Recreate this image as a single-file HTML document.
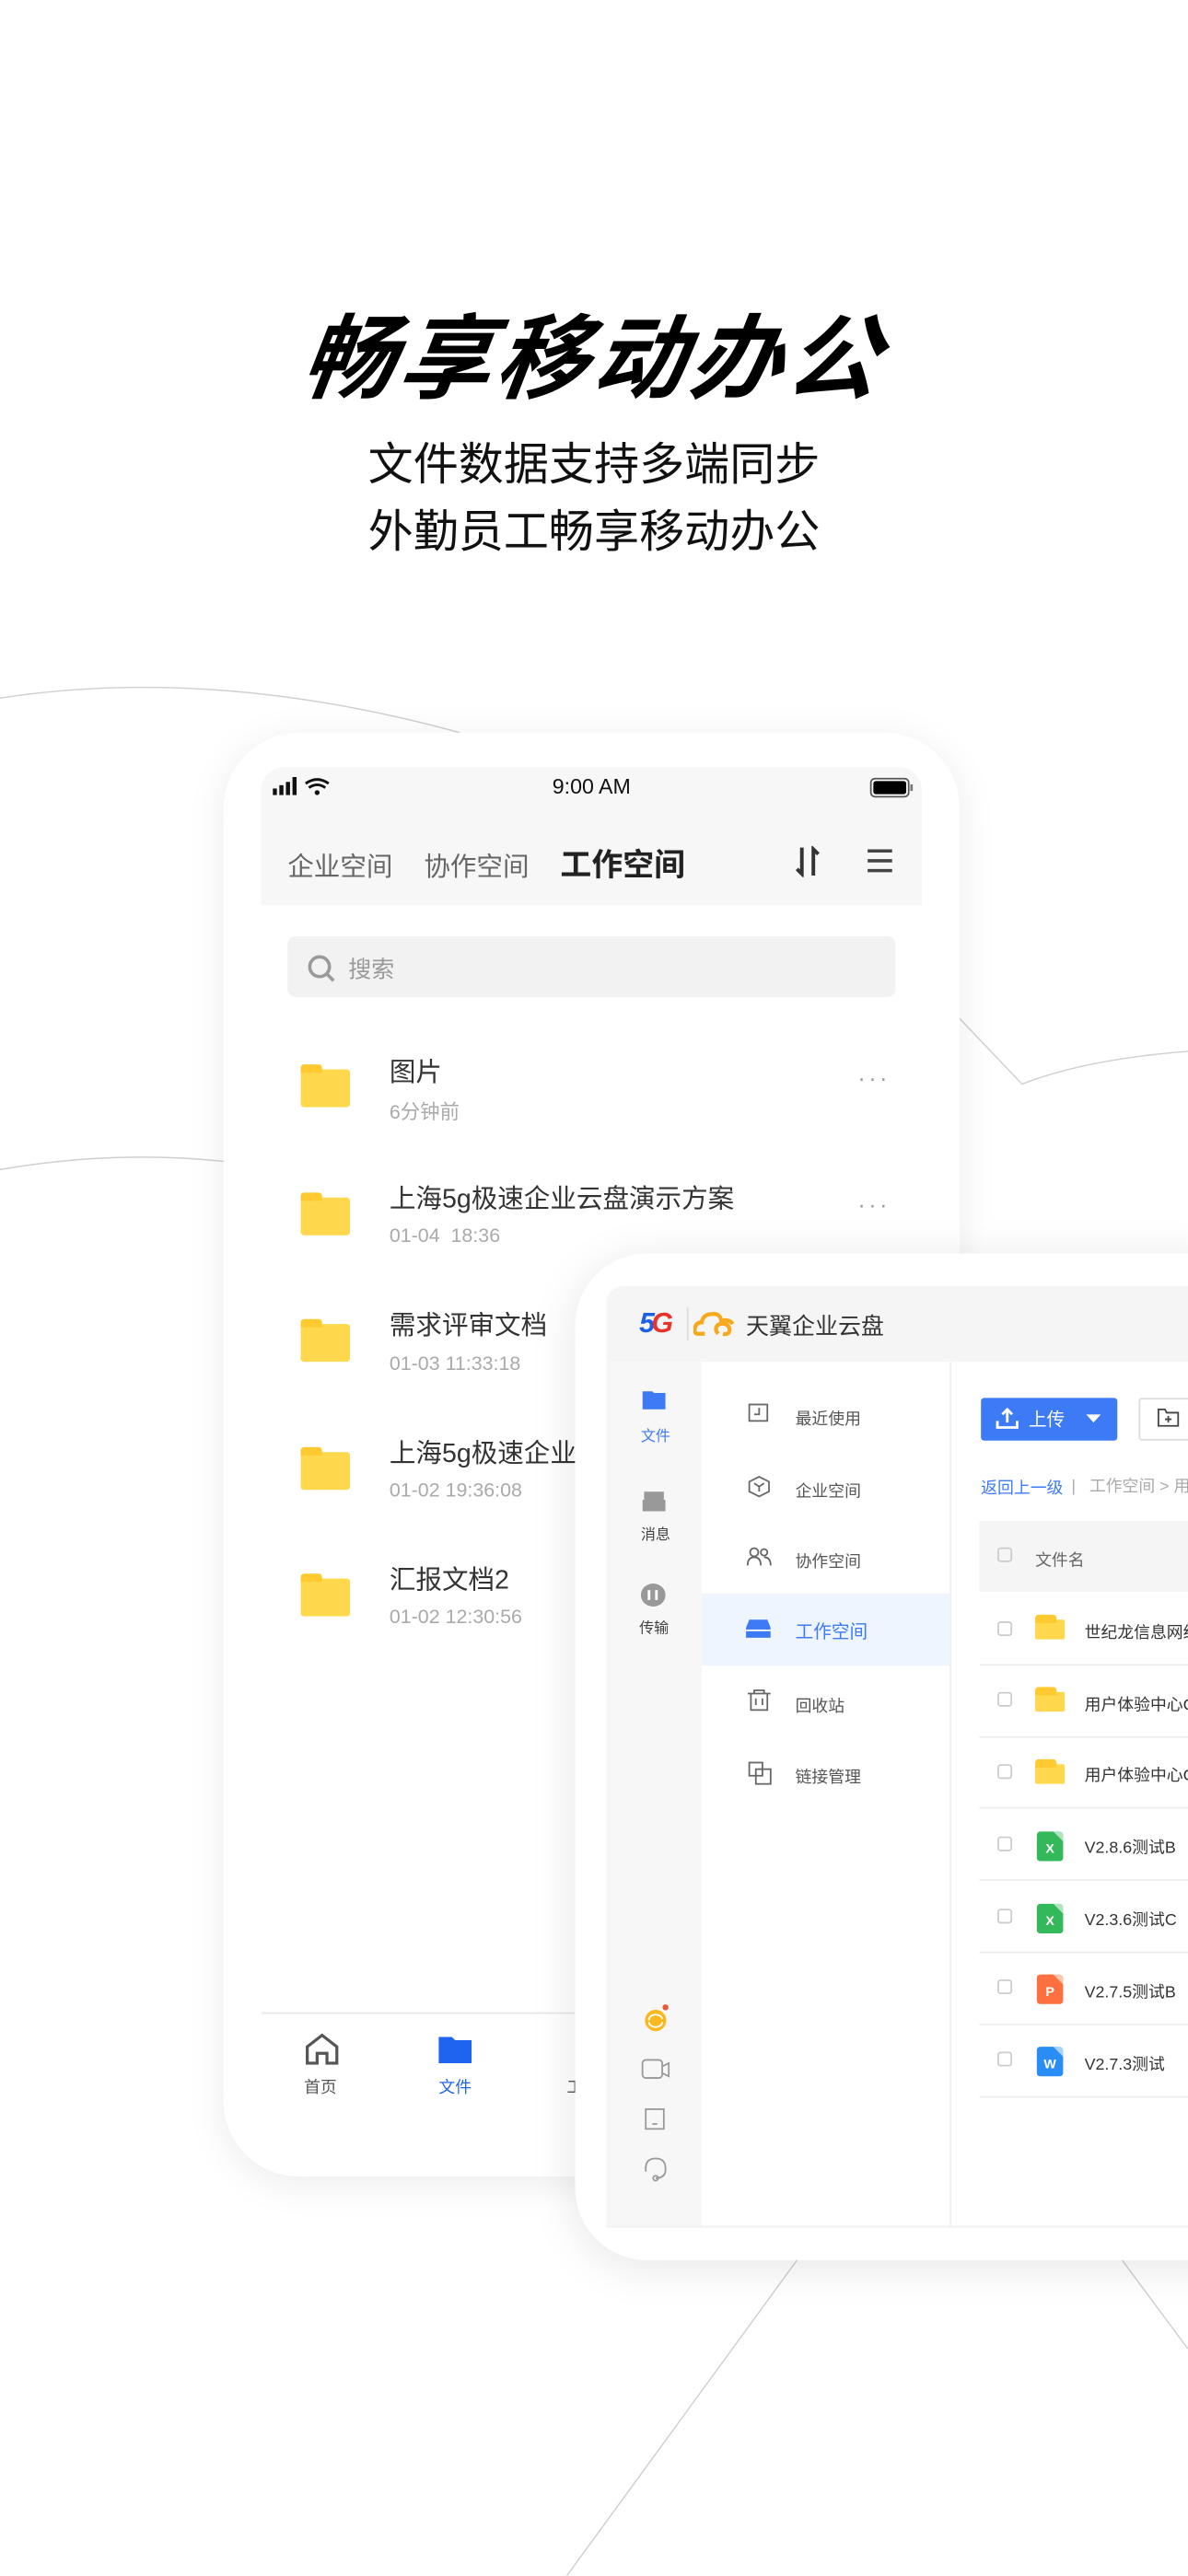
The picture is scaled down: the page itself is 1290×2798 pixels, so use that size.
<!DOCTYPE html>
<html><head><meta charset="utf-8">
<style>
*{margin:0;padding:0;box-sizing:border-box}
html,body{width:1290px;height:2796px;overflow:hidden;background:#fff}
#w{position:absolute;left:0;top:0;width:723px;height:1568px;transform:scale(1.78423);transform-origin:0 0;font-family:"Liberation Sans","Noto Sans CJK SC",sans-serif;}
.a{position:absolute;white-space:nowrap}
.fold{position:absolute;width:30px;height:23px;background:#FFD84D;border-radius:2px}
.fold:before{content:"";position:absolute;left:0;top:-3px;width:13px;height:5px;background:#FFC930;border-radius:2px 2px 0 0}
.t{font-size:16px;color:#333}
.s{font-size:12px;color:#aaa}
.dots{font-size:14px;color:#999;letter-spacing:2px}
.mi{font-size:10px;color:#555}
.cb{position:absolute;width:9px;height:9px;border:1px solid #ccc;border-radius:2px;background:#fff}
.rl{position:absolute;left:596px;width:130px;height:1px;background:#eee}
.fi{position:absolute;width:16px;height:18px;border-radius:2px;color:#fff;font-size:8px;font-weight:bold;text-align:center;line-height:22px}
.fi:after{content:"";position:absolute;right:0;top:0;border-style:solid;border-width:0 6px 6px 0;border-color:transparent #fff transparent transparent;opacity:.6}
.rn{font-size:10px;color:#333}
</style></head><body><div id="w">
<svg class="a" style="left:0;top:0" width="723" height="1568">
<g fill="none" stroke="#cfcfcf" stroke-width="0.8">
<path d="M0 425 Q130 405 280 446"/>
<path d="M0 712 Q70 700 136 707"/>
<path d="M584 620 L622 660 Q660 645 723 640"/>
<path d="M485 1376 L345 1568"/>
<path d="M683 1376 L723 1430"/>
</g></svg>
<div class="a" style="left:0;width:723px;top:183px;text-align:center;font-size:56px;font-weight:bold;font-style:italic;letter-spacing:3px;color:#000;transform:skewX(-8deg);line-height:72px">畅享移动办公</div>
<div class="a" style="left:0;width:723px;top:262px;text-align:center;font-size:27.5px;color:#111;line-height:41px">文件数据支持多端同步<br>外勤员工畅享移动办公</div>

<!-- phone -->
<div class="a" style="left:136px;top:446px;width:448px;height:879px;background:#fff;border-radius:46px;box-shadow:0 4px 24px rgba(0,0,0,.08)"></div>
<div class="a" style="left:159px;top:467px;width:402px;height:84px;background:#f7f7f7;border-radius:14px 14px 0 0"></div>
<svg class="a" style="left:166px;top:473px" width="40" height="12"><rect x="0" y="7" width="2.5" height="4" fill="#111"/><rect x="4" y="5" width="2.5" height="6" fill="#111"/><rect x="8" y="3" width="2.5" height="8" fill="#111"/><rect x="12" y="0" width="2.5" height="11" fill="#111"/><path d="M20 4 Q27 -1 34 4 M22 6.5 Q27 3 32 6.5" stroke="#111" stroke-width="1.6" fill="none"/><circle cx="27" cy="9.5" r="1.5" fill="#111"/></svg>
<div class="a" style="left:300px;width:120px;text-align:center;top:471px;font-size:13px;color:#111">9:00 AM</div>
<svg class="a" style="left:529px;top:473px" width="28" height="13"><rect x="1" y="1" width="23" height="11" rx="2.5" fill="#fff" stroke="#555"/><rect x="2.5" y="2.5" width="20" height="8" rx="1.5" fill="#000"/><rect x="25" y="4.5" width="1.5" height="4" fill="#777"/></svg>
<div class="a" style="left:175px;top:514px;font-size:16px;color:#666">企业空间</div>
<div class="a" style="left:258px;top:514px;font-size:16px;color:#666">协作空间</div>
<div class="a" style="left:341px;top:512px;font-size:19px;font-weight:bold;color:#222">工作空间</div>
<svg class="a" style="left:483px;top:515px" width="18" height="19" stroke="#333" stroke-width="2.2" fill="none"><path d="M5 1 V17 L2 14"/><path d="M12 18 V2 L15 5"/></svg>
<svg class="a" style="left:528px;top:516px" width="15" height="16" stroke="#444" stroke-width="2"><path d="M0 2H15M0 8H15M0 14H15"/></svg>
<div class="a" style="left:175px;top:570px;width:370px;height:37px;background:#f2f2f2;border-radius:5px"></div>
<svg class="a" style="left:187px;top:581px" width="17" height="17" stroke="#999" stroke-width="2" fill="none"><circle cx="7.5" cy="7.5" r="6"/><path d="M12 12 L16 16"/></svg>
<div class="a" style="left:212px;top:580px;font-size:14px;color:#999">搜索</div>

<div class="fold" style="left:183px;top:651px"></div>
<div class="a t" style="left:237px;top:639px">图片</div>
<div class="a s" style="left:237px;top:668px">6分钟前</div>
<div class="a dots" style="left:522px;top:648px">···</div>
<div class="fold" style="left:183px;top:729px"></div>
<div class="a t" style="left:237px;top:716px">上海5g极速企业云盘演示方案</div>
<div class="a s" style="left:237px;top:745px">01-04&nbsp;&nbsp;18:36</div>
<div class="a dots" style="left:522px;top:725px">···</div>
<div class="fold" style="left:183px;top:806px"></div>
<div class="a t" style="left:237px;top:793px">需求评审文档</div>
<div class="a s" style="left:237px;top:823px">01-03 11:33:18</div>
<div class="fold" style="left:183px;top:884px"></div>
<div class="a t" style="left:237px;top:871px">上海5g极速企业云盘</div>
<div class="a s" style="left:237px;top:900px">01-02 19:36:08</div>
<div class="fold" style="left:183px;top:961px"></div>
<div class="a t" style="left:237px;top:948px">汇报文档2</div>
<div class="a s" style="left:237px;top:977px">01-02 12:30:56</div>

<div class="a" style="left:159px;top:1225px;width:402px;height:1px;background:#e8e8e8"></div>
<svg class="a" style="left:185px;top:1237px" width="22" height="20" stroke="#555" stroke-width="1.8" fill="none"><path d="M2 9 L11 2 L20 9 V19 H14 V13 H8 V19 H2 Z"/></svg>
<div class="a" style="left:185px;top:1262px;font-size:10px;color:#555">首页</div>
<svg class="a" style="left:266px;top:1238px" width="22" height="19"><path d="M1 2 H9 L11 4 H21 V18 H1 Z" fill="#1E64F0"/></svg>
<div class="a" style="left:267px;top:1262px;font-size:10px;color:#1E64F0">文件</div>
<div class="a" style="left:345px;top:1262px;font-size:10px;color:#555">工</div>

<!-- tablet -->
<div class="a" style="left:350px;top:763px;width:420px;height:613px;background:#fff;border-radius:44px;box-shadow:0 4px 28px rgba(0,0,0,.1)"></div>
<div class="a" style="left:369px;top:783px;width:360px;height:46px;background:#f5f5f5;border-radius:10px 0 0 0"></div>
<div class="a" style="left:389px;top:796px;font-size:17px;font-weight:bold;font-style:italic;color:#1E5FE8;letter-spacing:-2px">5<span style="color:#E8332A">G</span></div>
<div class="a" style="left:418px;top:796px;width:1px;height:20px;background:#ddd"></div>
<svg class="a" style="left:422px;top:797px" width="28" height="18" fill="none" stroke="#F6A91B" stroke-width="2.4"><path d="M7 15 H3 Q0 15 1 11 Q2 8 5 8 Q6 3 11 3 Q16 2 17 7 Q22 6 24 9"/><path d="M15 15 Q12 11 16 9 Q21 8 22 12 Q22 16 18 15"/></svg>
<div class="a" style="left:454px;top:797px;font-size:14px;color:#333">天翼企业云盘</div>

<div class="a" style="left:369px;top:829px;width:58px;height:526px;background:#f7f7f7"></div>
<svg class="a" style="left:391px;top:846px" width="14" height="12"><path d="M0 1H6L7 2H14V12H0Z" fill="#3D7AF5"/></svg>
<div class="a" style="left:390px;top:867px;font-size:9px;color:#3D7AF5">文件</div>
<svg class="a" style="left:391px;top:908px" width="14" height="12"><path d="M1 0H13V5H1ZM0 5H14V12H0Z" fill="#999"/></svg>
<div class="a" style="left:390px;top:927px;font-size:9px;color:#444">消息</div>
<svg class="a" style="left:390px;top:964px" width="15" height="14"><ellipse cx="7.5" cy="7" rx="7.5" ry="7" fill="#999"/><path d="M5 4V10M9.5 4V10" stroke="#fff" stroke-width="1.6"/></svg>
<div class="a" style="left:389px;top:984px;font-size:9px;color:#444">传输</div>
<svg class="a" style="left:390px;top:1219px" width="18" height="18"><circle cx="9" cy="11" r="6.5" fill="#F9B81E"/><path d="M5 11 A4 3 0 0 1 13 10 M13 12 A4 3 0 0 1 5 12" stroke="#fff" fill="none"/><circle cx="15" cy="3" r="1.8" fill="#E53"/></svg>
<svg class="a" style="left:390px;top:1253px" width="18" height="14" stroke="#999" fill="none"><rect x="1" y="1" width="12" height="11" rx="2"/><path d="M13 5 L17 3 V11 L13 9"/></svg>
<svg class="a" style="left:392px;top:1283px" width="14" height="14" stroke="#999" fill="none"><rect x="1" y="1" width="11" height="12"/><path d="M5 10H8"/></svg>
<svg class="a" style="left:390px;top:1312px" width="18" height="16" stroke="#999" fill="none"><path d="M3 10 V8 Q3 2 9 2 Q15 2 15 8 V10 M9 14 Q14 14 15 10"/><circle cx="9" cy="14" r="1.5"/></svg>

<div class="a" style="left:427px;top:970px;width:151px;height:44px;background:#EEF5FF"></div>
<div class="a" style="left:578px;top:829px;width:1px;height:526px;background:#eee"></div>
<svg class="a" style="left:455px;top:854px" width="14" height="14" stroke="#666" fill="none"><rect x="1" y="1" width="11" height="10"/><path d="M7 3V7H4"/></svg>
<div class="a mi" style="left:484px;top:855px">最近使用</div>
<svg class="a" style="left:455px;top:898px" width="14" height="14" stroke="#666" fill="none"><path d="M7 1L13 4V10L7 13L1 10V4Z M4 5L7 7L10 5 M7 7V10"/></svg>
<div class="a mi" style="left:484px;top:899px">企业空间</div>
<svg class="a" style="left:454px;top:941px" width="16" height="14" stroke="#666" fill="none"><circle cx="5" cy="4" r="2.5"/><path d="M1 12 Q1 7 5 7 Q9 7 9 12"/><circle cx="11" cy="4" r="2"/><path d="M11 7 Q15 7 15 12"/></svg>
<div class="a mi" style="left:484px;top:942px">协作空间</div>
<svg class="a" style="left:454px;top:985px" width="15" height="13"><path d="M2 1H13L15 6V12H0V6Z" fill="#3D7AF5"/><rect x="0" y="7" width="15" height="1" fill="#fff"/></svg>
<div class="a" style="left:484px;top:985px;font-size:11px;color:#3D7AF5">工作空间</div>
<svg class="a" style="left:455px;top:1028px" width="14" height="15" stroke="#666" fill="none"><path d="M0 3H14M4 3V1H10V3M2 3V13H12V3M5 6V10M9 6V10"/></svg>
<div class="a mi" style="left:484px;top:1030px">回收站</div>
<svg class="a" style="left:455px;top:1072px" width="15" height="15" stroke="#666" fill="none"><rect x="1" y="1" width="8" height="8"/><rect x="5" y="5" width="9" height="9"/></svg>
<div class="a mi" style="left:484px;top:1073px">链接管理</div>

<div class="a" style="left:597px;top:851px;width:83px;height:26px;background:#3D7AF5;border-radius:2px"></div>
<svg class="a" style="left:606px;top:857px" width="14" height="13" stroke="#fff" stroke-width="1.6" fill="none"><path d="M7 9V1M4 4L7 1L10 4M1 8V12H13V8"/></svg>
<div class="a" style="left:626px;top:856px;font-size:11px;color:#fff">上传</div>
<svg class="a" style="left:661px;top:861px" width="9" height="6"><path d="M0 0H9L4.5 5Z" fill="#fff"/></svg>
<div class="a" style="left:693px;top:851px;width:40px;height:26px;border:1px solid #ddd;border-radius:2px;background:#fff"></div>
<svg class="a" style="left:704px;top:857px" width="14" height="12" stroke="#444" fill="none"><path d="M1 1H5L6 3H13V11H1Z M7 5V9M5 7H9"/></svg>
<div class="a" style="left:597px;top:897px;font-size:10px;color:#3D7AF5">返回上一级</div>
<div class="a" style="left:652px;top:896px;font-size:10px;color:#aaa">|&nbsp;&nbsp;&nbsp;工作空间 &gt; 用</div>
<div class="a" style="left:596px;top:926px;width:130px;height:43px;background:#f5f5f5"></div>
<div class="cb" style="left:607px;top:942px;background:#f5f5f5"></div>
<div class="a" style="left:630px;top:941px;font-size:10px;color:#666">文件名</div>

<div class="rl" style="top:1013px"></div><div class="rl" style="top:1057px"></div><div class="rl" style="top:1100px"></div><div class="rl" style="top:1144px"></div><div class="rl" style="top:1188px"></div><div class="rl" style="top:1232px"></div><div class="rl" style="top:1276px"></div>
<div class="cb" style="left:607px;top:987px"></div><div class="fold" style="left:630px;top:986px;width:18px;height:12px;border-radius:1px"></div><div class="a rn" style="left:660px;top:985px">世纪龙信息网络</div>
<div class="cb" style="left:607px;top:1030px"></div><div class="fold" style="left:630px;top:1030px;width:18px;height:12px;border-radius:1px"></div><div class="a rn" style="left:660px;top:1029px">用户体验中心C</div>
<div class="cb" style="left:607px;top:1074px"></div><div class="fold" style="left:630px;top:1074px;width:18px;height:12px;border-radius:1px"></div><div class="a rn" style="left:660px;top:1072px">用户体验中心C</div>
<div class="cb" style="left:607px;top:1118px"></div><div class="fi" style="left:631px;top:1115px;background:#33B85A">X</div><div class="a rn" style="left:660px;top:1116px">V2.8.6测试B</div>
<div class="cb" style="left:607px;top:1162px"></div><div class="fi" style="left:631px;top:1159px;background:#33B85A">X</div><div class="a rn" style="left:660px;top:1160px">V2.3.6测试C</div>
<div class="cb" style="left:607px;top:1205px"></div><div class="fi" style="left:631px;top:1202px;background:#FF7040">P</div><div class="a rn" style="left:660px;top:1204px">V2.7.5测试B</div>
<div class="cb" style="left:607px;top:1249px"></div><div class="fi" style="left:631px;top:1246px;background:#2A8CF5">W</div><div class="a rn" style="left:660px;top:1248px">V2.7.3测试</div>
<div class="a" style="left:369px;top:1355px;width:360px;height:1px;background:#f0f0f0"></div>
</div></body></html>
